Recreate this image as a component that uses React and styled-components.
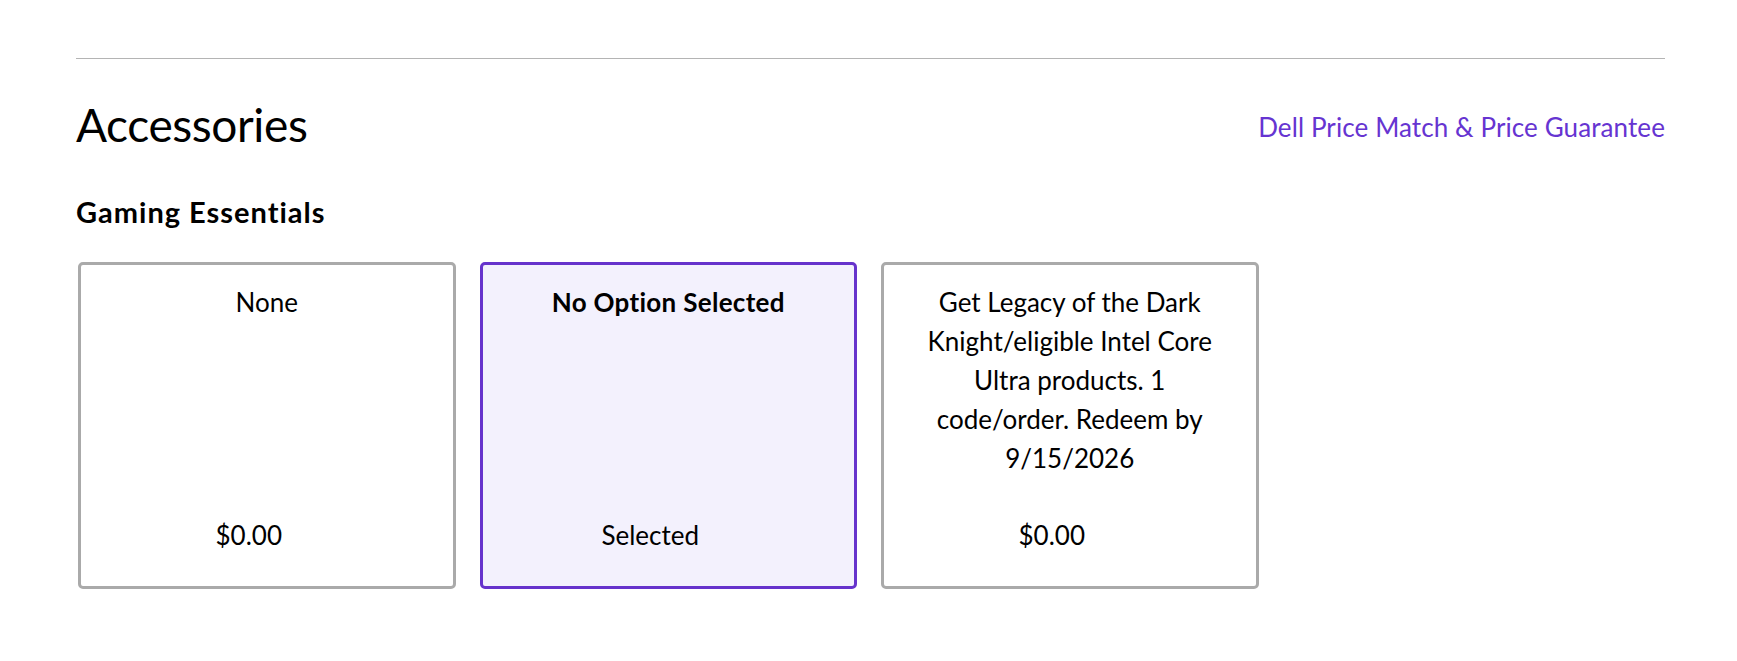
import React from "react";
import styled, { createGlobalStyle } from "styled-components";

const Global = createGlobalStyle`
  html, body { margin: 0; padding: 0; background: #fff; }
  body { font-family: Lato, "Open Sans", sans-serif; color: #000; }
`;

const Page = styled.div`
  padding: 58px 72px 40px 76px;
`;

const Divider = styled.hr`
  margin: 0;
  border: none;
  border-top: 1px solid #b4b4b4;
`;

const HeaderRow = styled.div`
  display: flex;
  justify-content: space-between;
  align-items: flex-end;
  margin-top: 37px;
`;

const Title = styled.h2`
  margin: 0;
  font-size: 46px;
  line-height: 58px;
  font-weight: 400;
  letter-spacing: -0.4px;
`;

const Link = styled.a`
  font-size: 26px;
  line-height: 54px;
  letter-spacing: 0.1px;
  color: #6634d1;
  text-decoration: none;
  cursor: pointer;
`;

const SubTitle = styled.h3`
  margin: 41px 0 0;
  font-size: 29px;
  line-height: 34px;
  font-weight: 700;
  letter-spacing: 1px;
`;

const CardRow = styled.div`
  display: flex;
  gap: 24px;
  margin-top: 33px;
  padding-left: 2px;
`;

const Card = styled.div`
  box-sizing: border-box;
  width: 377.5px;
  height: 327px;
  border: 3px solid ${(p) => (p.$selected ? "#6633cc" : "#aaaaaa")};
  border-radius: 5px;
  background: ${(p) => (p.$selected ? "#f3f1fd" : "#fff")};
  display: flex;
  flex-direction: column;
  justify-content: space-between;
  padding: 18px 24px 31px;
  font-size: 26px;
  line-height: 39px;
  cursor: pointer;
`;

const CardTitle = styled.div`
  text-align: center;
  font-weight: ${(p) => (p.$bold ? 700 : 400)};
  letter-spacing: ${(p) => (p.$bold ? "0.3px" : "0")};
`;

const PriceRow = styled.div`
  display: flex;
  justify-content: center;
  padding-right: 36px;
`;

const options = [
  { title: "None", price: "$0.00" },
  { title: "No Option Selected", price: "Selected", selected: true },
  {
    title:
      "Get Legacy of the Dark Knight/eligible Intel Core Ultra products. 1 code/order. Redeem by 9/15/2026",
    price: "$0.00",
  },
];

export default function App() {
  return (
    <>
      <Global />
      <Page>
        <Divider />
        <HeaderRow>
          <Title>Accessories</Title>
          <Link>Dell Price Match &amp; Price Guarantee</Link>
        </HeaderRow>
        <SubTitle>Gaming Essentials</SubTitle>
        <CardRow>
          {options.map((o) => (
            <Card key={o.title} $selected={o.selected}>
              <CardTitle $bold={o.selected}>{o.title}</CardTitle>
              <PriceRow>{o.price}</PriceRow>
            </Card>
          ))}
        </CardRow>
      </Page>
    </>
  );
}
